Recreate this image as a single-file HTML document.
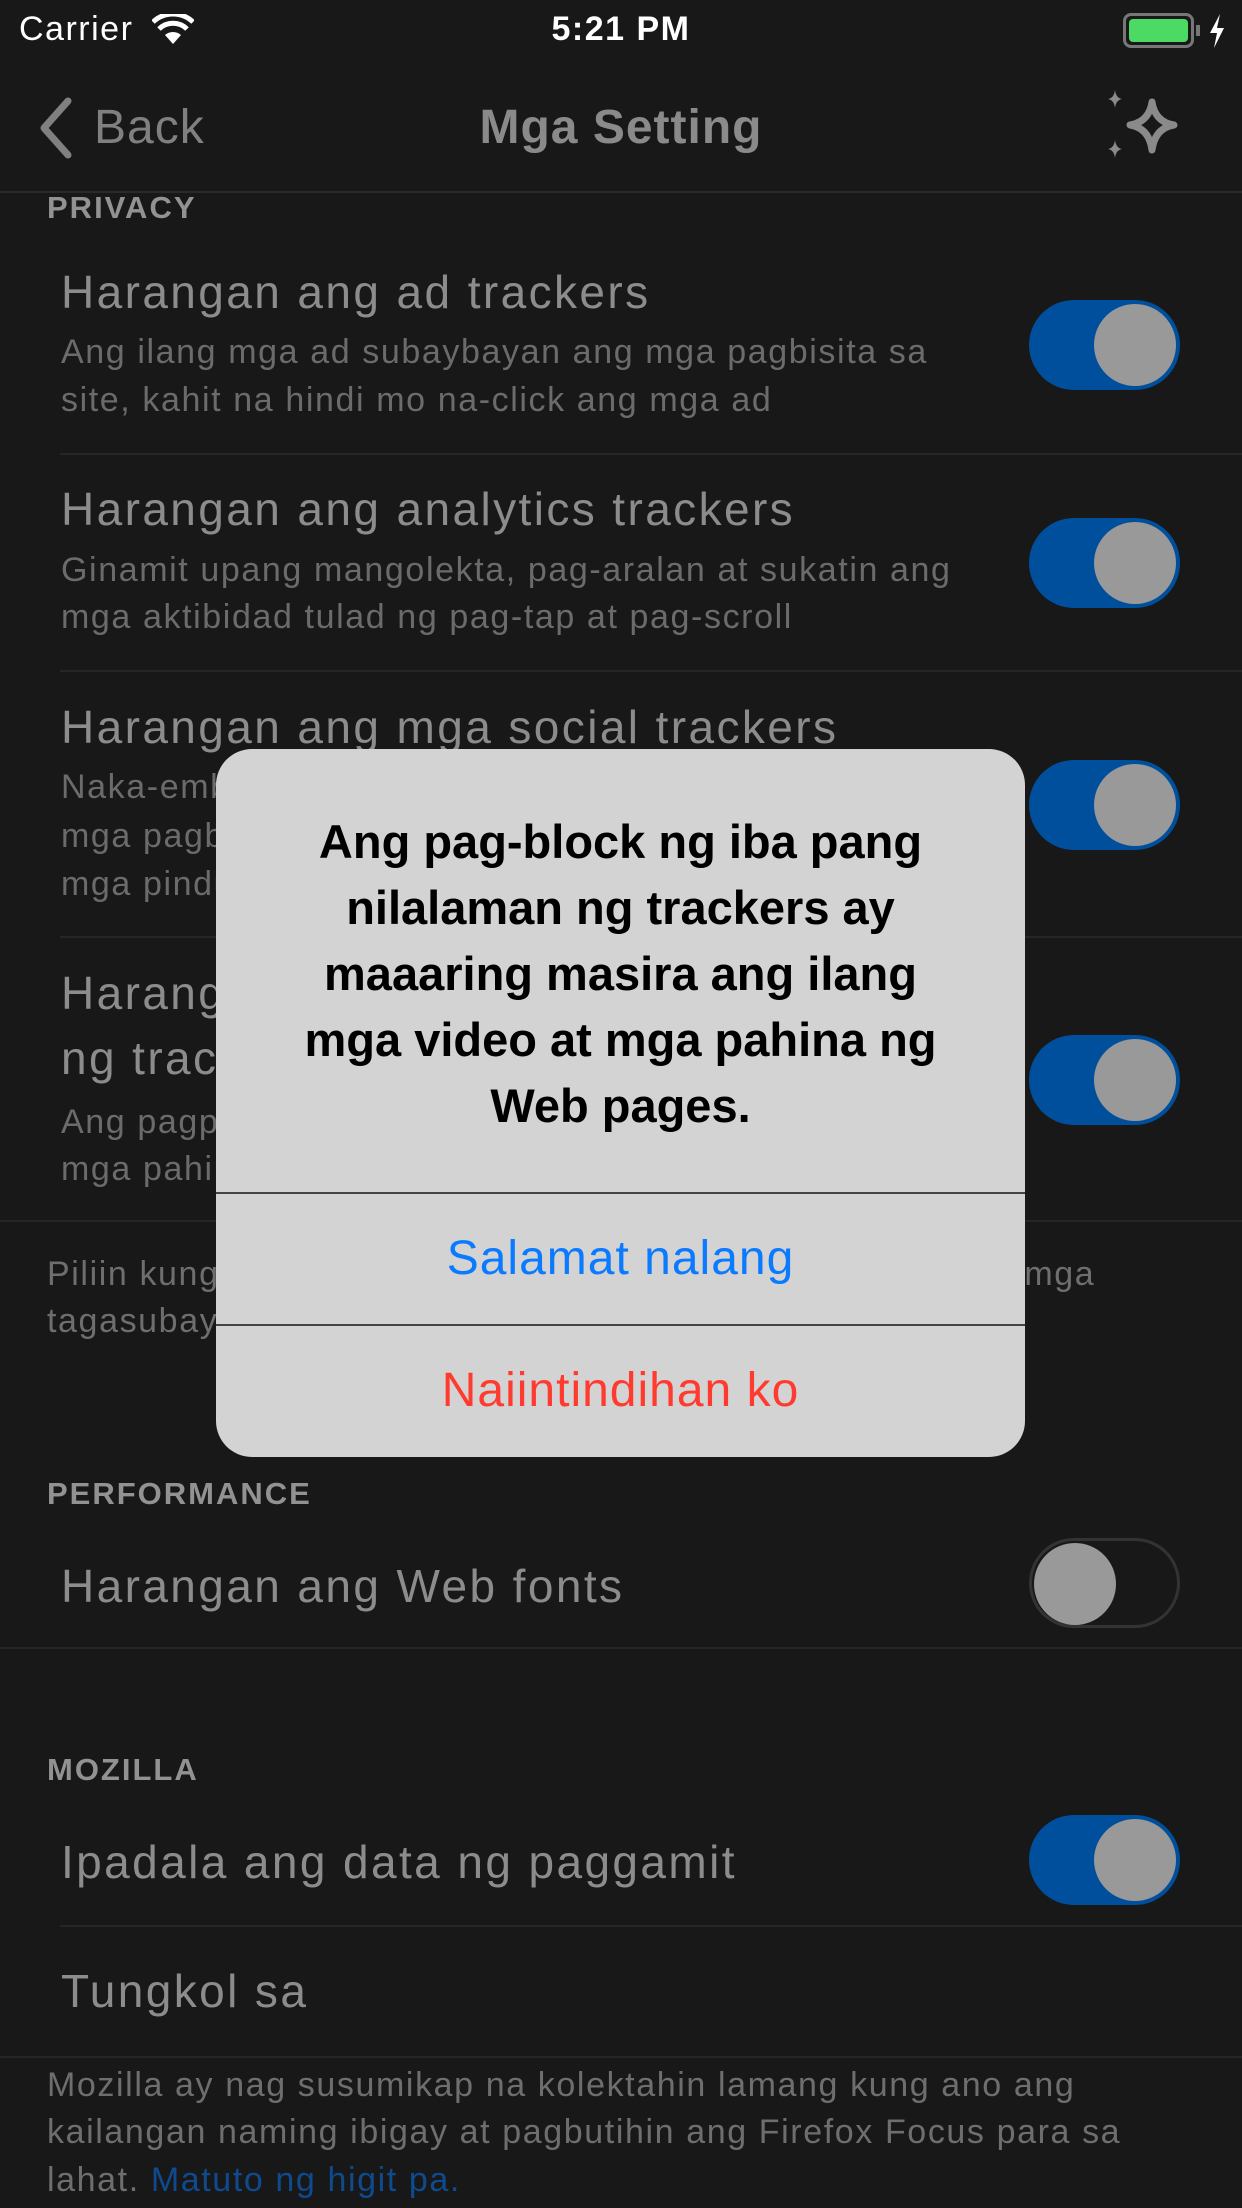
<!DOCTYPE html>
<html><head><meta charset="utf-8"><style>
*{margin:0;padding:0;box-sizing:border-box}
body{width:1242px;height:2208px;background:#181818;font-family:"Liberation Sans",sans-serif;position:relative;overflow:hidden}
.a{position:absolute;white-space:nowrap}
.t{color:#8c8c8c;font-size:46px;left:61px;letter-spacing:2.4px}
.s{color:#6b6b6b;font-size:34px;left:61px;letter-spacing:1.6px}
.h{color:#929292;font-size:31px;font-weight:bold;left:47px;letter-spacing:2px}
.sep{position:absolute;height:2px;background:#262626;right:0}
.tg{position:absolute;left:1029px;width:151px;height:90px;border-radius:45px;background:#004f9c}
.tg:after{content:"";position:absolute;right:4px;top:4px;width:82px;height:82px;border-radius:50%;background:#999}
.off{background:#181818;border:3px solid #333}
.off:after{left:2px;right:auto;top:2px;width:82px;height:82px}
</style></head><body>
<div class="a" style="left:19px;top:10px;color:#fff;font-size:34px;letter-spacing:1.5px">Carrier</div>
<svg class="a" style="left:152px;top:14px" width="42" height="32" viewBox="0 0 42 32"><path d="M21 30 L13 21 A12 12 0 0 1 29 21 Z" fill="#fff"/><path d="M7 15 A20 20 0 0 1 35 15" stroke="#fff" stroke-width="5" fill="none"/><path d="M1 8 A29 29 0 0 1 41 8" stroke="#fff" stroke-width="5" fill="none"/></svg>
<div class="a" style="left:0;width:1242px;text-align:center;top:10px;color:#fff;font-size:34px;font-weight:bold;letter-spacing:1.5px">5:21 PM</div>
<div class="a" style="left:1123px;top:13px;width:71px;height:35px;border:3px solid #777;border-radius:8px;padding:3px"><div style="background:#4cd964;width:100%;height:100%;border-radius:4px"></div></div>
<div class="a" style="left:1196px;top:25px;width:4px;height:11px;background:#777"></div>
<svg class="a" style="left:1208px;top:14px" width="18" height="34" viewBox="0 0 18 34"><path d="M12 0 L2 19 H9 L6 34 L16 14 H9 Z" fill="#fff"/></svg>

<svg class="a" style="left:36px;top:97px" width="40" height="62" viewBox="0 0 40 62"><path d="M32 4 L8 31 L32 58" stroke="#808080" stroke-width="7" fill="none" stroke-linecap="round" stroke-linejoin="round"/></svg>
<div class="a" style="left:94px;top:100px;color:#808080;font-size:48px;letter-spacing:1px">Back</div>
<div class="a" style="left:0;width:1242px;text-align:center;top:100px;color:#8a8a8a;font-size:48px;font-weight:bold;letter-spacing:1px">Mga Setting</div>
<svg class="a" style="left:1108px;top:88px" width="76" height="74" viewBox="0 0 76 74"><path d="M44 14 Q47 34 66 37 Q47 40 44 62 Q41 40 22 37 Q41 34 44 14 Z" fill="none" stroke="#8a8a8a" stroke-width="7" stroke-linejoin="round"/><path d="M7 2 Q8 10 14 11 Q8 12 7 20 Q6 12 0 11 Q6 10 7 2 Z M7 52 Q8 60 14 61 Q8 62 7 70 Q6 62 0 61 Q6 60 7 52 Z" fill="#8a8a8a"/></svg>
<div class="sep" style="left:0;top:191px;height:2px;background:#2a2a2a"></div>

<div class="a h" style="top:190px">PRIVACY</div>
<div class="a t" style="top:265px">Harangan ang ad trackers</div>
<div class="a s" style="top:333px">Ang ilang mga ad subaybayan ang mga pagbisita sa</div>
<div class="a s" style="top:381px">site, kahit na hindi mo na-click ang mga ad</div>
<div class="tg" style="top:300px"></div>
<div class="sep" style="left:60px;top:453px"></div>

<div class="a t" style="top:482px">Harangan ang analytics trackers</div>
<div class="a s" style="top:551px">Ginamit upang mangolekta, pag-aralan at sukatin ang</div>
<div class="a s" style="top:598px">mga aktibidad tulad ng pag-tap at pag-scroll</div>
<div class="tg" style="top:518px"></div>
<div class="sep" style="left:60px;top:670px"></div>

<div class="a t" style="top:700px">Harangan ang mga social trackers</div>
<div class="a s" style="top:768px">Naka-embed sa mga site upang masubaybayan ang iyong</div>
<div class="a s" style="top:817px">mga pagbisita at magpakita ng mga social</div>
<div class="a s" style="top:865px">mga pindutan</div>
<div class="tg" style="top:760px"></div>
<div class="sep" style="left:60px;top:936px"></div>

<div class="a t" style="top:966px">Harangan ang iba pang nilalaman</div>
<div class="a t" style="top:1031px">ng trackers</div>
<div class="a s" style="top:1103px">Ang pagpapagana nito ay maaaring masira ang ilang</div>
<div class="a s" style="top:1150px">mga pahina ng web</div>
<div class="tg" style="top:1035px"></div>
<div class="sep" style="left:0;top:1220px"></div>

<div class="a s" style="left:47px;top:1255px;color:#6e6e6e">Piliin kung aling mga tagasubaybay ang i-block o iba pang mga</div>
<div class="a s" style="left:47px;top:1302px;color:#6e6e6e">tagasubaybay</div>

<div class="a h" style="top:1476px">PERFORMANCE</div>
<div class="a t" style="top:1559px">Harangan ang Web fonts</div>
<div class="tg off" style="top:1538px"></div>
<div class="sep" style="left:0;top:1647px"></div>

<div class="a h" style="top:1752px">MOZILLA</div>
<div class="a t" style="top:1835px">Ipadala ang data ng paggamit</div>
<div class="tg" style="top:1815px"></div>
<div class="sep" style="left:60px;top:1925px"></div>
<div class="a t" style="top:1964px">Tungkol sa</div>
<div class="sep" style="left:0;top:2056px"></div>
<div class="a s" style="left:47px;top:2066px;color:#6e6e6e">Mozilla ay nag susumikap na kolektahin lamang kung ano ang</div>
<div class="a s" style="left:47px;top:2113px;color:#6e6e6e">kailangan naming ibigay at pagbutihin ang Firefox Focus para sa</div>
<div class="a s" style="left:47px;top:2161px;color:#6e6e6e">lahat. <span style="color:#0f4a8f">Matuto ng higit pa.</span></div>

<div class="a" style="left:216px;top:749px;width:809px;height:708px;background:#d3d3d3;border-radius:36px;overflow:hidden">
<div style="position:absolute;left:0;right:0;top:60px;text-align:center;color:#000;font-size:47px;font-weight:bold;line-height:66px;white-space:nowrap">Ang pag-block ng iba pang<br>nilalaman ng trackers ay<br>maaaring masira ang ilang<br>mga video at mga pahina ng<br>Web pages.</div>
<div style="position:absolute;left:0;right:0;top:443px;height:2px;background:#444"></div>
<div style="position:absolute;left:0;right:0;top:482px;text-align:center;color:#0a7aff;font-size:48px;letter-spacing:1px">Salamat nalang</div>
<div style="position:absolute;left:0;right:0;top:575px;height:2px;background:#444"></div>
<div style="position:absolute;left:0;right:0;top:614px;text-align:center;color:#ff3b30;font-size:48px;letter-spacing:1px">Naiintindihan ko</div>
</div>
</body></html>
